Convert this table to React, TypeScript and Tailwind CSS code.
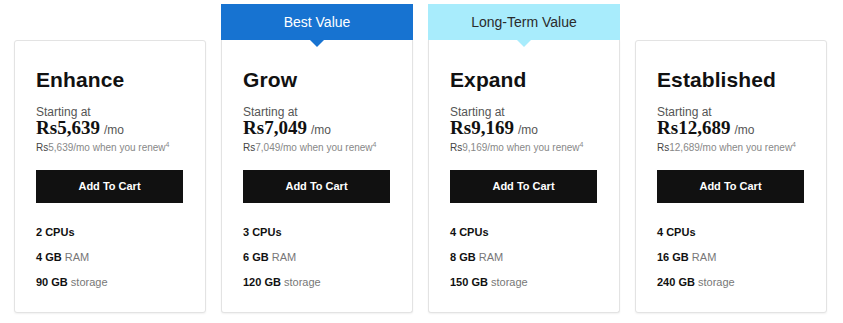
import React from "react";

type Plan = {
  name: string;
  price: string;
  cpus: string;
  ram: string;
  storage: string;
  badge?: { text: string; kind: "blue" | "cyan" };
};

const plans: Plan[] = [
  { name: "Enhance", price: "5,639", cpus: "2 CPUs", ram: "4 GB", storage: "90 GB" },
  { name: "Grow", price: "7,049", cpus: "3 CPUs", ram: "6 GB", storage: "120 GB", badge: { text: "Best Value", kind: "blue" } },
  { name: "Expand", price: "9,169", cpus: "4 CPUs", ram: "8 GB", storage: "150 GB", badge: { text: "Long-Term Value", kind: "cyan" } },
  { name: "Established", price: "12,689", cpus: "4 CPUs", ram: "16 GB", storage: "240 GB" },
];

function Badge({ text, kind }: { text: string; kind: "blue" | "cyan" }) {
  const blue = kind === "blue";
  return (
    <div
      className={
        "relative flex h-[36px] items-center justify-center text-[14px] " +
        (blue ? "bg-[#1773d1] text-white" : "bg-[#a8ecfc] text-[#2b2b2b]")
      }
    >
      <span className="pt-[1px]">{text}</span>
      <span
        className={
          "absolute left-1/2 top-full -translate-x-1/2 border-x-[7px] border-t-[7px] border-x-transparent " +
          (blue ? "border-t-[#1773d1]" : "border-t-[#a8ecfc]")
        }
      />
    </div>
  );
}

function Card({ plan }: { plan: Plan }) {
  return (
    <div className={plan.badge ? "flex w-[192px] flex-col" : "mt-[36px] flex w-[192px] flex-col"}>
      {plan.badge && <Badge text={plan.badge.text} kind={plan.badge.kind} />}
      <div
        className={
          "h-[273px] border border-[#e3e3e3] bg-white px-[21px] shadow-[0_1px_2px_rgba(0,0,0,0.06)] " +
          (plan.badge ? "rounded-b-[3px] border-t-0 pt-[26px]" : "rounded-[3px] pt-[25px]")
        }
      >
        <div className="text-[21px] font-bold leading-[28px] tracking-[0.1px] text-[#111]">{plan.name}</div>
        <div className="mt-[11px] text-[12px] leading-[14px] text-[#555]">Starting at</div>
        <div className="flex items-baseline leading-[18px]">
          <span className="font-['Liberation_Serif'] text-[19px] font-bold text-[#111]">Rs{plan.price}</span>
          <span className="ml-[4px] text-[12px] text-[#555]">/mo</span>
        </div>
        <div className="mt-[2px] text-[10px] leading-[14px] text-[#888]">
          <span className="text-[#444]">Rs</span>
          {plan.price}/mo when you renew
          <span className="relative -top-[4px] text-[7px] leading-none">4</span>
        </div>
        <button className="mt-[15px] flex h-[33px] w-[147px] items-center justify-center bg-[#111] text-[11px] font-bold text-white">
          Add To Cart
        </button>
        <div className="mt-[21px] flex flex-col gap-[9px] text-[11px] leading-[16px] text-[#111]">
          <div className="font-bold">{plan.cpus}</div>
          <div>
            <span className="font-bold">{plan.ram}</span> <span className="text-[#777]">RAM</span>
          </div>
          <div>
            <span className="font-bold">{plan.storage}</span> <span className="text-[#777]">storage</span>
          </div>
        </div>
      </div>
    </div>
  );
}

export default function App() {
  return (
    <div className="h-[323px] w-[843px] bg-white font-['Liberation_Sans',Arial,sans-serif]">
      <div className="flex items-start gap-[15px] pl-[14px] pt-[4px]">
        {plans.map((p) => (
          <Card key={p.name} plan={p} />
        ))}
      </div>
    </div>
  );
}
